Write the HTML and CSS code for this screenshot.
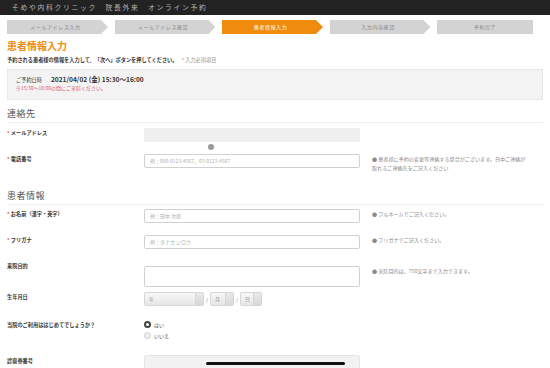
FILE: index.html
```html
<!DOCTYPE html>
<html lang="ja">

<head>
    <meta charset="UTF-8">
    <meta name="viewport" content="width=device-width, initial-scale=1.0">
    <title>患者情報入力 | そめや内科クリニック</title>
    <link rel="stylesheet" href="styles.css">
</head>
<body>
    <header class="site-header">そめや内科クリニック　院長外来　オンライン予約</header>

    <ol class="steps">
        <li class="step">メールアドレス入力</li>
        <li class="step">メールアドレス確認</li>
        <li class="step active">患者情報入力</li>
        <li class="step">入力内容確認</li>
        <li class="step last">予約完了</li>
    </ol>

    <main class="content">
        <h1 class="page-title">患者情報入力</h1>
        <p class="lead">予約される患者様の情報を入力して、「次へ」ボタンを押してください。 <span class="required-note"><span class="req">*</span> 入力必須項目</span></p>

        <div class="reserve-box">
            <p class="reserve-date"><span class="reserve-label">ご予約日時</span><b>2021/04/02 (金) 15:30〜16:00</b></p>
            <p class="reserve-warn">※15:30〜16:00の間にご来院ください。</p>
        </div>

        <h2 class="section-title">連絡先</h2>

        <div class="row">
            <label class="label"><span class="req">*</span> メールアドレス</label>
            <div class="field">
                <div class="input autofill"></div>
                <span class="drag-dot"></span>
            </div>
        </div>
        <div class="row">
            <label class="label"><span class="req">*</span> 電話番号</label>
            <div class="field"><div class="input placeholder">例：090-0123-4567、03-0123-4567</div></div>
            <p class="note">● 患者様に予約の変更等連絡する場合がございます。日中ご連絡が<br>取れるご連絡先をご記入ください</p>
        </div>

        <h2 class="section-title second">患者情報</h2>

        <div class="row">
            <label class="label"><span class="req">*</span> お名前（漢字・英字）</label>
            <div class="field"><div class="input placeholder">例：田中 次郎</div></div>
            <p class="note">● フルネームでご記入ください。</p>
        </div>
        <div class="row">
            <label class="label"><span class="req">*</span> フリガナ</label>
            <div class="field"><div class="input placeholder">例：タナカ ジロウ</div></div>
            <p class="note">● フリガナでご記入ください。</p>
        </div>
        <div class="row purpose">
            <label class="label">来院目的</label>
            <div class="field"><div class="input textarea"></div></div>
            <p class="note">● 来院目的は、750文字まで入力できます。</p>
        </div>
        <div class="row">
            <label class="label">生年月日</label>
            <div class="field birth">
                <div class="select year">年</div>
                <span class="slash">/</span>
                <div class="select month">月</div>
                <span class="slash">/</span>
                <div class="select day">日</div>
            </div>
        </div>
        <div class="row first-visit">
            <label class="label">当院のご利用ははじめてでしょうか？</label>
            <div class="field radios">
                <div class="radio-item"><span class="radio checked"></span>はい</div>
                <div class="radio-item"><span class="radio"></span>いいえ</div>
            </div>
        </div>
        <div class="row ticket">
            <label class="label">診察券番号</label>
            <div class="field"><div class="input gray"></div></div>
        </div>
    </main>

    <div class="home-indicator"></div>
</body>

</html>
```

FILE: styles.css
```css
body {
    font-family: "Noto Sans CJK JP", "Noto Sans", sans-serif;
    margin: 0;
    padding: 0;
    color: #333;
    background-color: #ffffff;
    height: 368px;
    overflow: hidden;
}

p {
    margin: 0;
}

.site-header {
    background-color: #222222;
    color: #b5b5b5;
    height: 15px;
    line-height: 14px;
    font-size: 6.8px;
    letter-spacing: 1.7px;
    padding-left: 12px;
}

.steps {
    list-style: none;
    margin: 5px 0 0 7px;
    padding: 0;
    display: flex;
    gap: 6.5px;
}

.step {
    width: 101px;
    height: 14px;
    line-height: 14px;
    background-color: #d3d3d3;
    color: #888;
    font-size: 5px;
    letter-spacing: 0.6px;
    text-align: center;
    padding-right: 4px;
    box-sizing: border-box;
    clip-path: polygon(0 0, calc(100% - 7px) 0, 100% 50%, calc(100% - 7px) 100%, 0 100%);
}

.step.active {
    background-color: #ef8c0e;
    color: #ffffff;
}

.step.last {
    width: 96px;
    padding-right: 0;
    clip-path: none;
}

.content {
    padding: 0 7px;
}

.page-title {
    color: #ef8c0e;
    font-size: 10px;
    font-weight: bold;
    line-height: 12px;
    margin: 6px 0 0;
}

.lead {
    font-size: 5.2px;
    font-weight: bold;
    line-height: 8px;
    margin-top: 4px;
}

.required-note {
    font-weight: normal;
    color: #999;
    margin-left: 3px;
}

.req {
    color: #d9534f;
}

.reserve-box {
    margin-top: 5px;
    background-color: #f3f3f3;
    border: 1px solid #e8e8e8;
    height: 31px;
    box-sizing: border-box;
    padding: 5px 8px 0;
}

.reserve-date {
    font-size: 5.2px;
    line-height: 8px;
}

.reserve-label {
    margin-right: 9px;
}

.reserve-date b {
    font-size: 6.6px;
}

.reserve-warn {
    font-size: 5px;
    line-height: 8px;
    color: #e0566b;
}

.section-title {
    font-size: 9px;
    font-weight: normal;
    color: #555;
    line-height: 12px;
    margin: 8px 0 5px;
    padding-bottom: 2px;
    border-bottom: 1px solid #eeeeee;
    letter-spacing: 0.5px;
}

.section-title.second {
    margin-top: 18px;
    margin-bottom: 4px;
}

.row {
    display: grid;
    grid-template-columns: 125px 216px 1fr;
    column-gap: 12px;
    align-items: start;
    margin-bottom: 12px;
}

.label {
    font-size: 5.2px;
    font-weight: bold;
    line-height: 9px;
}

.field {
    position: relative;
}

.input {
    height: 14px;
    box-sizing: border-box;
    border: 1px solid #d0d0d0;
    border-radius: 2px;
    font-size: 5px;
    line-height: 12px;
    padding-left: 5px;
    background-color: #fff;
}

.input.placeholder {
    color: #b0b0b0;
}

.input.autofill {
    background-color: #efefef;
    border-color: #efefef;
}

.drag-dot {
    position: absolute;
    left: 64px;
    top: 16px;
    width: 6px;
    height: 6px;
    border-radius: 50%;
    background-color: #9a9a9a;
}

.input.textarea {
    height: 21px;
}

.input.gray {
    background-color: #f2f2f2;
    border-color: #e4e4e4;
}

.note {
    font-size: 5.1px;
    line-height: 9px;
    color: #8a8a8a;
    white-space: nowrap;
}

.purpose {
    margin-bottom: 5px;
}

.purpose .field,
.purpose .note {
    margin-top: 5px;
}

.birth {
    display: flex;
    align-items: center;
    gap: 2px;
    margin-bottom: 2px;
}

.select {
    height: 14px;
    box-sizing: border-box;
    border: 1px solid #d6d6d6;
    border-radius: 2px;
    background: linear-gradient(#f7f7f7, #e6e6e6);
    font-size: 5px;
    line-height: 12px;
    color: #999;
    padding-left: 4px;
    position: relative;
}

.select::after {
    content: "";
    position: absolute;
    right: 0;
    top: 0;
    bottom: 0;
    width: 7px;
    border-left: 1px solid #d6d6d6;
    background: linear-gradient(#e9e9e9, #d8d8d8);
}

.select.year {
    width: 60px;
}

.select.month {
    width: 24px;
}

.select.day {
    width: 22px;
}

.slash {
    font-size: 5px;
    color: #777;
}

.first-visit {
    margin-bottom: 14px;
}

.radios {
    margin-top: -1px;
}

.radio-item {
    display: flex;
    align-items: center;
    gap: 3px;
    font-size: 5px;
    line-height: 11px;
    color: #555;
}

.radio {
    width: 5px;
    height: 5px;
    border-radius: 50%;
    border: 1px solid #d0d0d0;
    background-color: #eee;
}

.radio.checked {
    border: 2px solid #444;
    width: 3px;
    height: 3px;
    background-color: #fff;
}

.ticket .label {
    padding-top: 1px;
}

.home-indicator {
    position: fixed;
    left: 206px;
    bottom: 3px;
    width: 139px;
    height: 3px;
    border-radius: 2px;
    background-color: #111;
}
```
